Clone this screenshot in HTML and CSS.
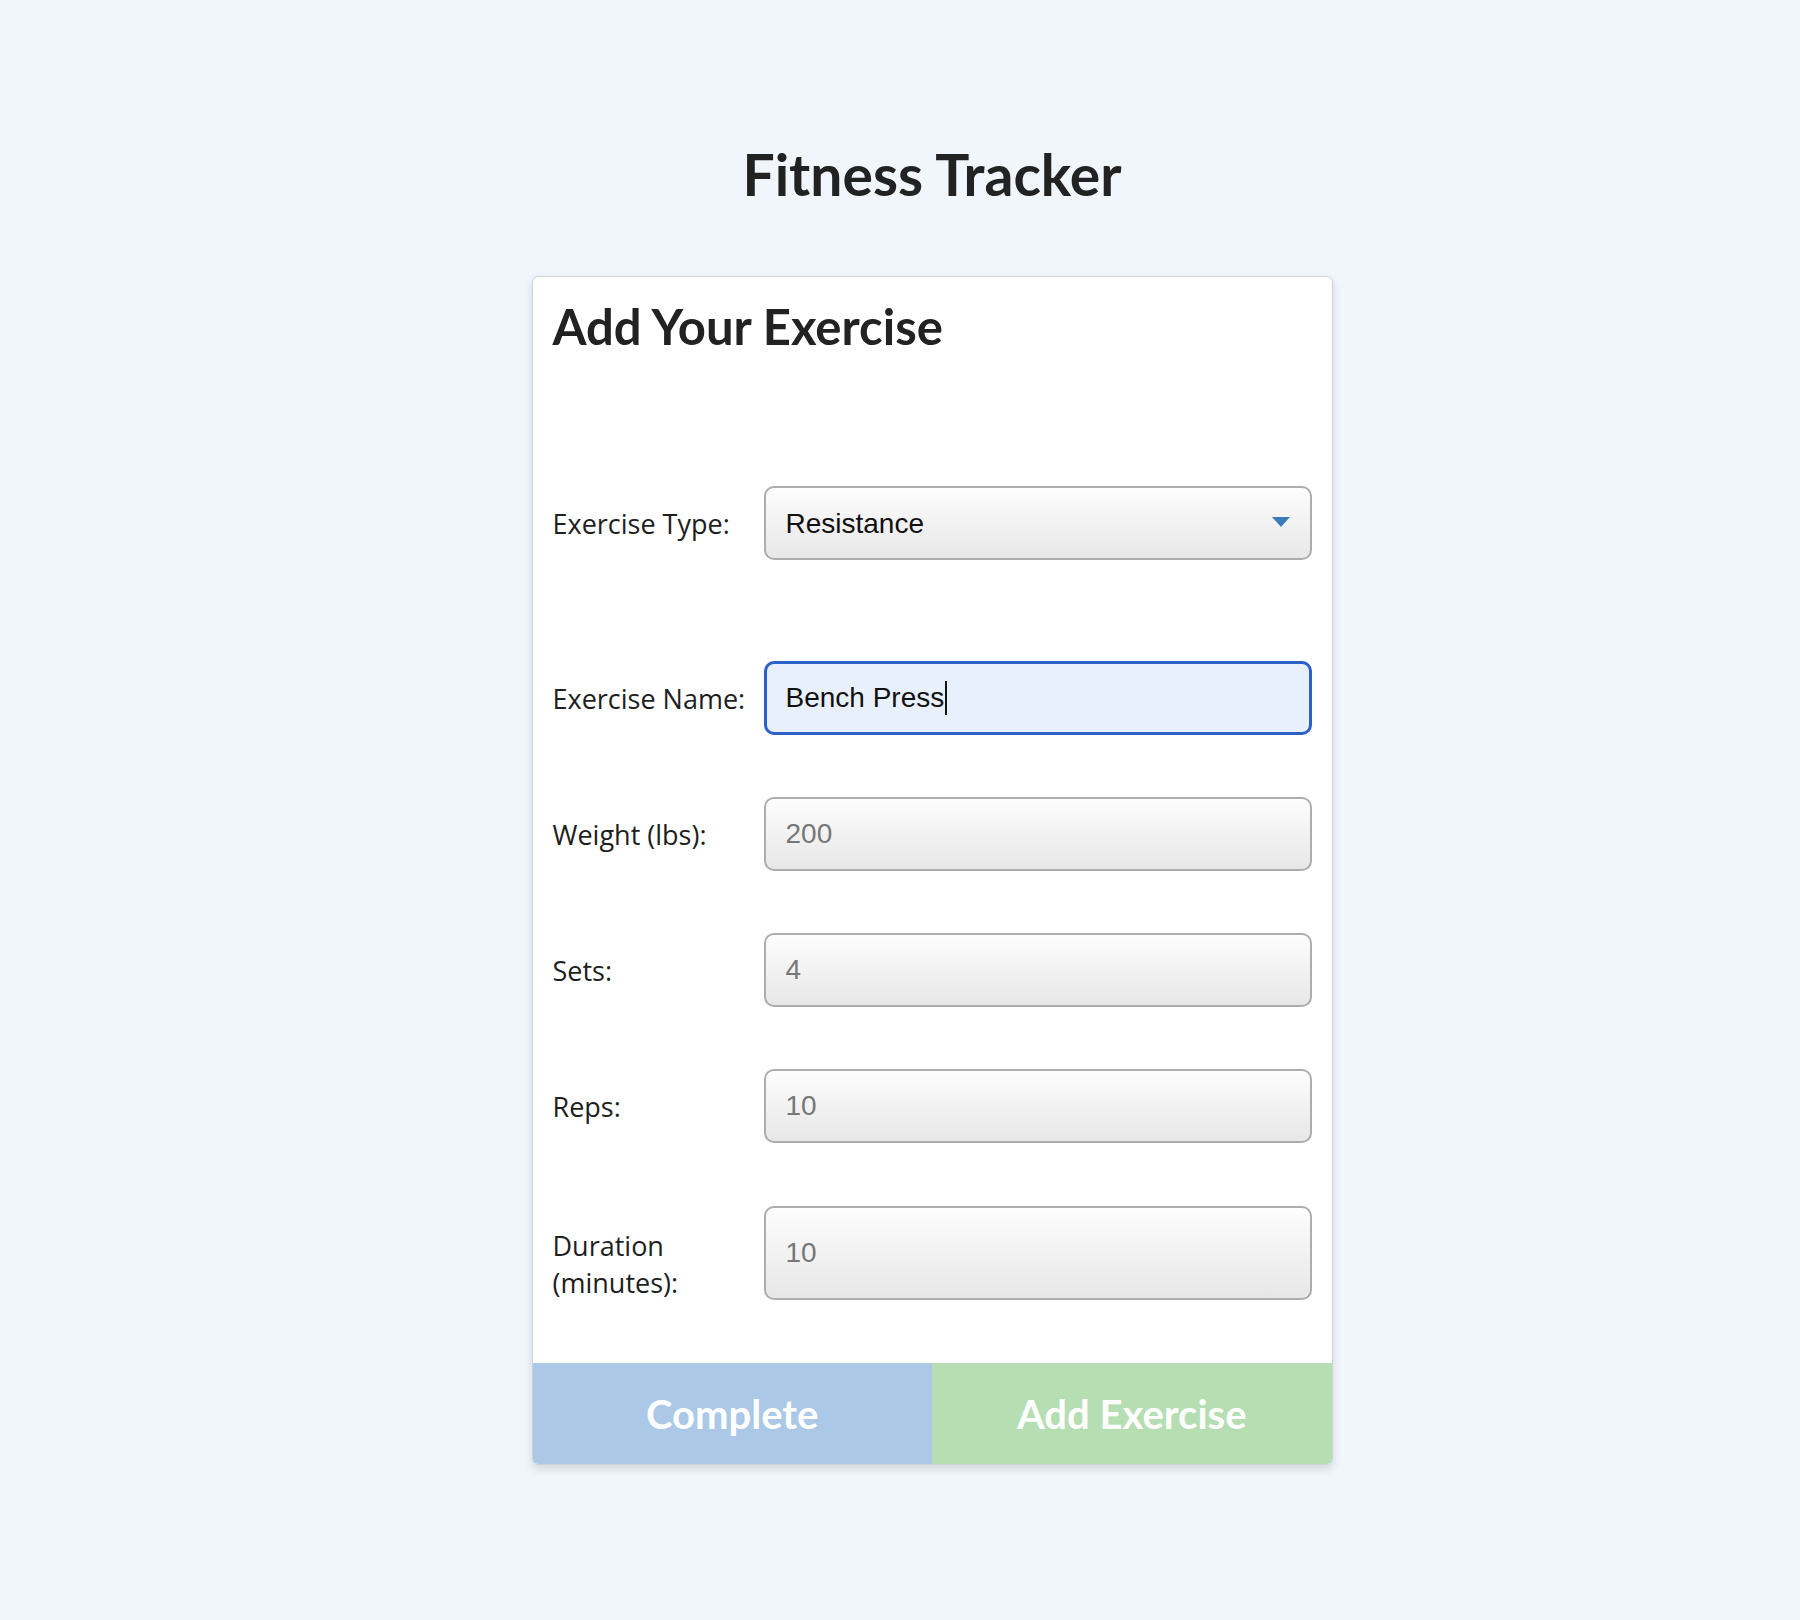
FILE: index.html
```html
<!DOCTYPE html>
<html lang="en">
<head>
<meta charset="utf-8">
<title>Fitness Tracker</title>
<link rel="stylesheet" href="styles.css">
</head>
<body>
<main class="page">
  <h1 class="title">Fitness Tracker</h1>
  <section class="card">
    <h2 class="card-title">Add Your Exercise</h2>
    <form class="form">
      <div class="row row-type">
        <label class="label" for="type">Exercise Type:</label>
        <div class="select-wrap">
          <select id="type" class="field select">
            <option>Resistance</option>
            <option>Cardio</option>
          </select>
          <svg class="arrow" width="18" height="10" viewBox="0 0 18 10"><path d="M0 0H18L9 10Z" fill="#3a7db9"/></svg>
        </div>
      </div>
      <div class="row row-name">
        <label class="label" for="name">Exercise Name:</label>
        <div class="field field-active"><span>Bench Press</span><span class="caret"></span></div>
      </div>
      <div class="row">
        <label class="label" for="weight">Weight (lbs):</label>
        <input id="weight" class="field" type="text" placeholder="200">
      </div>
      <div class="row">
        <label class="label" for="sets">Sets:</label>
        <input id="sets" class="field" type="text" placeholder="4">
      </div>
      <div class="row">
        <label class="label" for="reps">Reps:</label>
        <input id="reps" class="field" type="text" placeholder="10">
      </div>
      <div class="row row-duration">
        <label class="label label-duration" for="duration">Duration (minutes):</label>
        <input id="duration" class="field field-tall" type="text" placeholder="10">
      </div>
    </form>
    <div class="actions">
      <button class="btn btn-complete" type="button">Complete</button>
      <button class="btn btn-add" type="button">Add Exercise</button>
    </div>
  </section>
</main>
</body>
</html>
```

FILE: styles.css
```css
html, body {
  margin: 0;
  padding: 0;
}
body {
  background: #f1f6fd;
  font-family: "Lato", "Open Sans", sans-serif;
  color: #222;
}
.page {
  display: flex;
  flex-direction: column;
  align-items: center;
  padding: 140px 0 100px 64px;
}
.title {
  margin: 0 0 68px 0;
  font-family: "Lato", sans-serif;
  font-weight: 700;
  font-size: 57px;
  line-height: 1.2;
  color: #222;
  text-align: center;
}
.card {
  width: 801px;
  box-sizing: border-box;
  background: #fff;
  border: 1px solid #d0d3d6;
  border-radius: 6px;
  box-shadow: 0 4px 10px rgba(0, 0, 0, 0.13);
  overflow: hidden;
  display: flex;
  flex-direction: column;
}
.card-title {
  margin: 0;
  padding: 20px 20px 0;
  font-family: "Lato", sans-serif;
  font-weight: 700;
  font-size: 49px;
  line-height: 1.2;
  color: #222;
}
.form {
  display: flex;
  flex-direction: column;
  padding: 0 20px;
}
.row {
  display: grid;
  grid-template-columns: 211px 1fr;
  align-items: center;
  margin-top: 62px;
}
.row-type { margin-top: 130px; }
.row-name { margin-top: 101px; }
.label {
  font-family: "Open Sans", "DejaVu Sans", sans-serif;
  font-size: 27px;
  line-height: 37px;
  color: #1e1e1e;
  white-space: nowrap;
}
.label-duration {
  white-space: normal;
  margin-top: 22px;
}
.field {
  box-sizing: border-box;
  width: 100%;
  height: 74px;
  margin: 0;
  padding: 0 20px;
  border: 2px solid #adadad;
  border-radius: 10px;
  background: linear-gradient(#fdfdfd, #e7e7e7);
  font-family: "Liberation Sans", Arial, sans-serif;
  font-size: 28px;
  color: #111;
  outline: none;
  display: block;
}
.field::placeholder {
  color: #777;
}
.field-tall { height: 94px; }
.select-wrap {
  position: relative;
}
.select {
  appearance: none;
  -webkit-appearance: none;
}
.arrow {
  position: absolute;
  right: 22px;
  top: 31px;
}
.field-active {
  display: flex;
  align-items: center;
  border: 3px solid #2c5fc9;
  background: #e8f0fe;
  padding-left: 19px;
}
.caret {
  display: inline-block;
  width: 2px;
  height: 34px;
  background: #111;
  margin-left: 1px;
}
.actions {
  display: grid;
  grid-template-columns: 1fr 1fr;
  margin-top: 62px;
}
.btn {
  height: 101px;
  border: 0;
  margin: 0;
  font-family: "Lato", sans-serif;
  font-weight: 700;
  font-size: 40px;
  color: #fff;
  cursor: pointer;
}
.btn-complete { background: #abc8e7; }
.btn-add { background: #b5deb3; }
```
